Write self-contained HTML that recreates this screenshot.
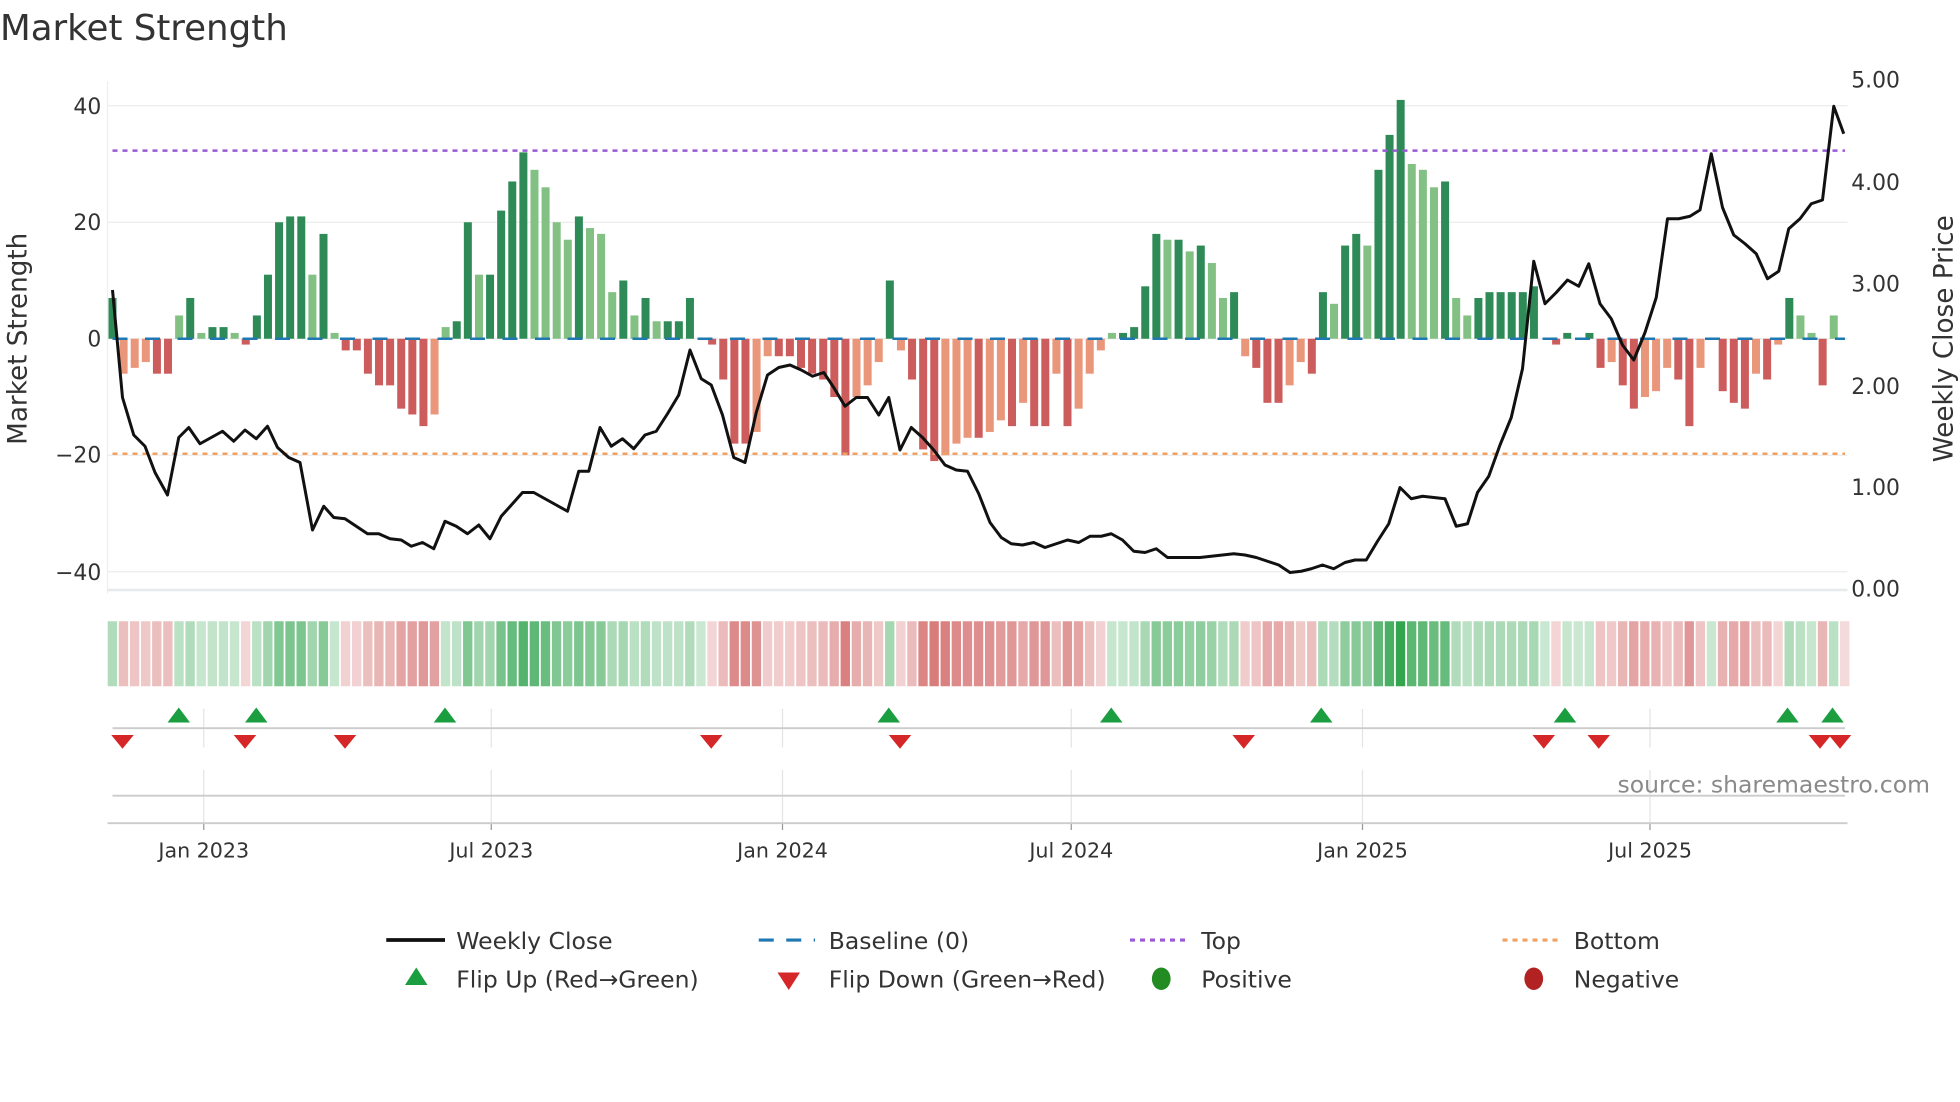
<!DOCTYPE html>
<html><head><meta charset="utf-8"><style>
html,body{margin:0;padding:0;background:#fff;width:1960px;height:1102px;overflow:hidden}
svg{display:block}
text{font-family:"DejaVu Sans","Liberation Sans",sans-serif;fill:#333}
</style></head><body>
<svg id="s" width="1960" height="1102" viewBox="0 0 1568 881.6" xmlns="http://www.w3.org/2000/svg">
<text x="0" y="32" font-size="28.5">Market Strength</text>
<g id="grid"></g>
<g id="bars"></g>
<line x1="90" y1="271" x2="1476" y2="271" stroke="#1f77b4" stroke-width="2" stroke-dasharray="12,14"/>
<line x1="90" y1="120.5" x2="1476" y2="120.5" stroke="#9b59d6" stroke-width="2" stroke-dasharray="4,4"/>
<line x1="90" y1="363" x2="1476" y2="363" stroke="#f0a060" stroke-width="2" stroke-dasharray="4,4"/>
<polyline id="price" fill="none" stroke="#111" stroke-width="2.4" stroke-linejoin="round"/>
<g id="heat"></g>
<g id="marks"></g>
<g font-size="17.5">
<text x="81" y="91" text-anchor="end">40</text>
<text x="81" y="184" text-anchor="end">20</text>
<text x="81" y="277" text-anchor="end">0</text>
<text x="81" y="370" text-anchor="end">−20</text>
<text x="81" y="464" text-anchor="end">−40</text>
<text x="1481" y="70">5.00</text>
<text x="1481" y="152">4.00</text>
<text x="1481" y="233">3.00</text>
<text x="1481" y="315">2.00</text>
<text x="1481" y="396">1.00</text>
<text x="1481" y="477">0.00</text>
</g>
<text font-size="21" transform="translate(21,271) rotate(-90)" text-anchor="middle">Market Strength</text>
<text font-size="21" transform="translate(1562,271) rotate(-90)" text-anchor="middle">Weekly Close Price</text>
<g font-size="16.5" text-anchor="middle">
<text x="163" y="686">Jan 2023</text>
<text x="393" y="686">Jul 2023</text>
<text x="626" y="686">Jan 2024</text>
<text x="857" y="686">Jul 2024</text>
<text x="1090" y="686">Jan 2025</text>
<text x="1320" y="686">Jul 2025</text>
</g>
<text x="1544" y="634" font-size="18.8" text-anchor="end" style="fill:#8a8a8a">source: sharemaestro.com</text>
<g font-size="18.8">
<line x1="309" y1="752" x2="356" y2="752" stroke="#111" stroke-width="3"/>
<text x="365" y="759">Weekly Close</text>
<line x1="607" y1="752" x2="652" y2="752" stroke="#1f77b4" stroke-width="2.5" stroke-dasharray="12,10"/>
<text x="663" y="759">Baseline (0)</text>
<line x1="904" y1="752" x2="950" y2="752" stroke="#9b59d6" stroke-width="2.5" stroke-dasharray="4,4"/>
<text x="961" y="759">Top</text>
<line x1="1202" y1="752" x2="1248" y2="752" stroke="#f0a060" stroke-width="2.5" stroke-dasharray="4,4"/>
<text x="1259" y="759">Bottom</text>
<polygon points="333,774 342,788 324,788" fill="#1a9e3f"/>
<text x="365" y="790">Flip Up (Red→Green)</text>
<polygon points="622,778 640,778 631,792" fill="#d62728"/>
<text x="663" y="790">Flip Down (Green→Red)</text>
<ellipse cx="929" cy="783" rx="7.5" ry="9" fill="#228b22"/>
<text x="961" y="790">Positive</text>
<ellipse cx="1227" cy="783" rx="7.5" ry="9" fill="#b22222"/>
<text x="1259" y="790">Negative</text>
</g>
</svg>
<script>
var NS="http://www.w3.org/2000/svg";
function el(p,t,a){var e=document.createElementNS(NS,t);for(var k in a)e.setAttribute(k,a[k]);p.appendChild(e);return e;}
var V=[7,-6,-5,-4,-6,-6,4,7,1,2,2,1,-1,4,11,20,21,21,11,18,1,-2,-2,-6,-8,-8,-12,-13,-15,-13,2,3,20,11,11,22,27,32,29,26,20,17,21,19,18,8,10,4,7,3,3,3,7,0,-1,-7,-18,-18,-16,-3,-3,-3,-5,-6,-7,-10,-20,-10,-8,-4,10,-2,-7,-19,-21,-20,-18,-17,-17,-16,-14,-15,-11,-15,-15,-6,-15,-12,-6,-2,1,1,2,9,18,17,17,15,16,13,7,8,-3,-5,-11,-11,-8,-4,-6,8,6,16,18,16,29,35,41,30,29,26,27,7,4,7,8,8,8,8,9,0,-1,1,0,1,-5,-4,-8,-12,-10,-9,-5,-7,-15,-5,0,-9,-11,-12,-6,-7,-1,7,4,1,-8,4];
var step=(1467-90)/(V.length-1);
var grid=document.getElementById('grid');
[40,20,0,-20,-40].forEach(function(v){var y=271-v*4.66;el(grid,'line',{x1:86,x2:1478,y1:y,y2:y,stroke:'#ececec','stroke-width':1});});
el(grid,'line',{x1:86,x2:86,y1:65,y2:475,stroke:'#eee','stroke-width':1});
el(grid,'line',{x1:86,x2:1478,y1:472,y2:472,stroke:'#e6eaec','stroke-width':2});
var bars=document.getElementById('bars'),heat=document.getElementById('heat');
for(var i=0;i<V.length;i++){var v=V[i],x=90+i*step,p=i?Math.abs(V[i-1]):0,dark=Math.abs(v)>=p;
 if(v>0)el(bars,'rect',{x:x-3.2,y:271-v*4.66,width:6.4,height:v*4.66,fill:dark?'#2e8b57':'#82c084'});
 else if(v<0)el(bars,'rect',{x:x-3.2,y:271,width:6.4,height:-v*4.66,fill:dark?'#cd5c5c':'#e9967a'});
 var a,c;if(v>=0){a=0.25+0.7*v/41;c='rgba(40,160,70,'+a+')';}else{a=0.22+0.55*(-v)/21;c='rgba(205,85,85,'+a+')';}
 el(heat,'rect',{x:x-step/2+0.6,y:497,width:step-1.4,height:52,fill:c});
}
el(heat,'rect',{x:1467+step/2+0.6,y:497,width:step-1.4,height:52,fill:'rgba(205,85,85,0.22)'});
var P=[[90,232],[98,318],[107,348],[116,357],[124,378],[134,396],[143,350],[151,342],[160,355],[169,350],[178,345],[187,353],[196,344],[205,351],[214,341],[222,358],[231,366],[240,370],[250,424],[259,405],[267,414],[276,415],[285,421],[294,427],[303,427],[312,431],[321,432],[329,437],[338,434],[347,439],[356,417],[365,421],[374,427],[383,420],[392,431],[401,413],[410,403],[418,394],[427,394],[436,399],[445,404],[454,409],[463,377],[471,377],[480,342],[489,357],[498,351],[507,359],[516,348],[525,345],[534,331],[543,316],[552,280],[561,303],[569,308],[578,332],[587,366],[596,370],[605,330],[614,300],[623,294],[632,292],[641,296],[650,301],[659,298],[667,310],[676,325],[685,318],[694,318],[703,332],[711,318],[720,360],[729,342],[738,350],[747,360],[756,372],[765,376],[774,377],[783,395],[792,418],[801,430],[809,435],[818,436],[827,434],[836,438],[845,435],[854,432],[863,434],[872,429],[881,429],[889,427],[898,432],[907,441],[916,442],[925,439],[934,446],[942,446],[951,446],[960,446],[969,445],[978,444],[987,443],[996,444],[1005,446],[1014,449],[1023,452],[1032,458],[1041,457],[1049,455],[1058,452],[1067,455],[1076,450],[1084,448],[1093,448],[1102,433],[1111,419],[1120,390],[1129,399],[1138,397],[1147,398],[1156,399],[1165,421],[1174,419],[1182,394],[1191,381],[1200,356],[1209,334],[1218,295],[1227,209],[1236,243],[1245,234],[1254,224],[1263,229],[1271,211],[1280,243],[1289,255],[1298,276],[1307,288],[1316,266],[1325,238],[1334,175],[1343,175],[1352,173],[1360,168],[1369,123],[1378,166],[1387,188],[1396,195],[1405,203],[1414,223],[1423,217],[1431,183],[1440,175],[1449,163],[1458,160],[1467,85],[1475,107]];
document.getElementById('price').setAttribute('points',P.map(function(q){return q.join(',')}).join(' '));
var m=document.getElementById('marks');
[163,393,626,857,1090,1320].forEach(function(x){el(m,'line',{x1:x,x2:x,y1:567,y2:598,stroke:'#e4e4e4','stroke-width':1});el(m,'line',{x1:x,x2:x,y1:616,y2:658,stroke:'#e4e4e4','stroke-width':1});el(m,'line',{x1:x,x2:x,y1:658,y2:664,stroke:'#999','stroke-width':1});});
el(m,'line',{x1:90,x2:1476,y1:582.5,y2:582.5,stroke:'#ccc','stroke-width':1.5});
el(m,'line',{x1:90,x2:1476,y1:636.5,y2:636.5,stroke:'#ccc','stroke-width':1.5});
el(m,'line',{x1:86,x2:1478,y1:658.5,y2:658.5,stroke:'#ccc','stroke-width':1.5});
[143,205,356,711,889,1057,1252,1430,1466].forEach(function(x){el(m,'polygon',{points:(x)+',566 '+(x+9)+',578 '+(x-9)+',578',fill:'#1a9e3f'});});
[98,196,276,569,720,995,1235,1279,1456,1472].forEach(function(x){el(m,'polygon',{points:(x-9)+',588 '+(x+9)+',588 '+x+',599',fill:'#d62728'});});
</script>
</body></html>
